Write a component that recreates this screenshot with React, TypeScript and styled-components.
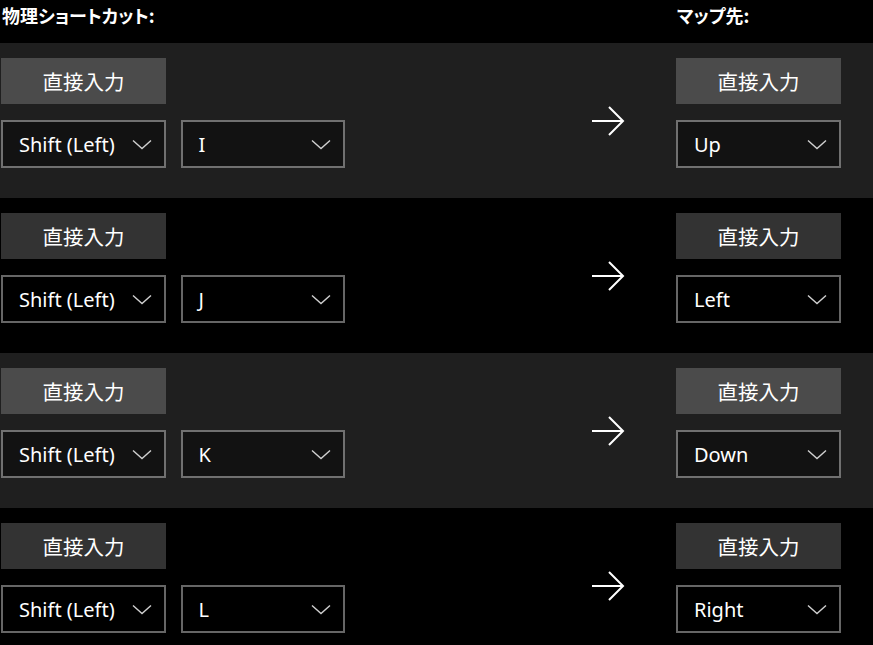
import React from "react";
import styled, { createGlobalStyle } from "styled-components";

const GlobalStyle = createGlobalStyle`
  html, body {
    margin: 0;
    padding: 0;
    background: #000000;
  }
  body {
    font-family: "Noto Sans", "Noto Sans CJK JP", sans-serif;
    color: #ffffff;
    overflow: hidden;
  }
`;

interface Mapping {
  modifier: string;
  key: string;
  target: string;
}

const mappings: Mapping[] = [
  { modifier: "Shift (Left)", key: "I", target: "Up" },
  { modifier: "Shift (Left)", key: "J", target: "Left" },
  { modifier: "Shift (Left)", key: "K", target: "Down" },
  { modifier: "Shift (Left)", key: "L", target: "Right" },
];

const Page = styled.div`
  width: 873px;
  height: 645px;
  overflow: hidden;
`;

const Header = styled.div`
  display: grid;
  grid-template-columns: 344px 1fr 165px;
  padding: 0 32px 0 2px;
  height: 43px;
  font-family: "Noto Sans CJK JP", sans-serif;
  font-feature-settings: "palt";
  font-weight: 700;
  font-size: 18px;
  line-height: 31px;

  .target {
    grid-column: 3;
    padding-left: 1px;
  }
`;

const Row = styled.div<{ $shaded: boolean }>`
  display: grid;
  grid-template-columns: 344px 1fr 165px;
  align-items: center;
  padding: 15px 32px 30px 1px;
  background: ${(p) => (p.$shaded ? "#1f1f1f" : "#000000")};
`;

const Column = styled.div`
  display: flex;
  flex-direction: column;
  gap: 16px;
`;

const ComboRow = styled.div`
  display: flex;
  gap: 15px;
`;

const InputButton = styled.button`
  width: 165px;
  height: 46px;
  border: none;
  padding: 0;
  background: rgba(255, 255, 255, 0.2);
  color: #ffffff;
  font-family: "Noto Sans CJK JP", sans-serif;
  font-size: 20.5px;
  cursor: pointer;
`;

const Combo = styled.div`
  box-sizing: border-box;
  width: 165px;
  height: 48px;
  border: 2px solid rgba(255, 255, 255, 0.4);
  background: rgba(0, 0, 0, 0.4);
  display: flex;
  align-items: center;
  justify-content: space-between;
  padding: 0 12px 0 16px;
  font-size: 20px;
  color: #ffffff;

  .label {
    white-space: nowrap;
  }
`;

const ArrowWrap = styled.div`
  justify-self: end;
  margin: 16px 51px 0 0;
  display: flex;
`;

const Chevron = () => (
  <svg width="20" height="11" viewBox="0 0 20 11" fill="none">
    <path d="M1 1.5 L10 9.5 L19 1.5" stroke="#d0d0d0" strokeWidth="1.4" />
  </svg>
);

const Arrow = () => (
  <svg width="33" height="30" viewBox="0 0 33 30" fill="none">
    <path d="M0 15 H31" stroke="#ffffff" strokeWidth="2" />
    <path d="M17 1 L31 15 L17 29" stroke="#ffffff" strokeWidth="2" />
  </svg>
);

const Select = ({ value }: { value: string }) => (
  <Combo>
    <span className="label">{value}</span>
    <Chevron />
  </Combo>
);

export default function App() {
  return (
    <Page>
      <GlobalStyle />
      <Header>
        <span>物理ショートカット:</span>
        <span className="target">マップ先:</span>
      </Header>
      {mappings.map((m, i) => (
        <Row key={m.key} $shaded={i % 2 === 0}>
          <Column>
            <InputButton>直接入力</InputButton>
            <ComboRow>
              <Select value={m.modifier} />
              <Select value={m.key} />
            </ComboRow>
          </Column>
          <ArrowWrap>
            <Arrow />
          </ArrowWrap>
          <Column>
            <InputButton>直接入力</InputButton>
            <Select value={m.target} />
          </Column>
        </Row>
      ))}
    </Page>
  );
}
